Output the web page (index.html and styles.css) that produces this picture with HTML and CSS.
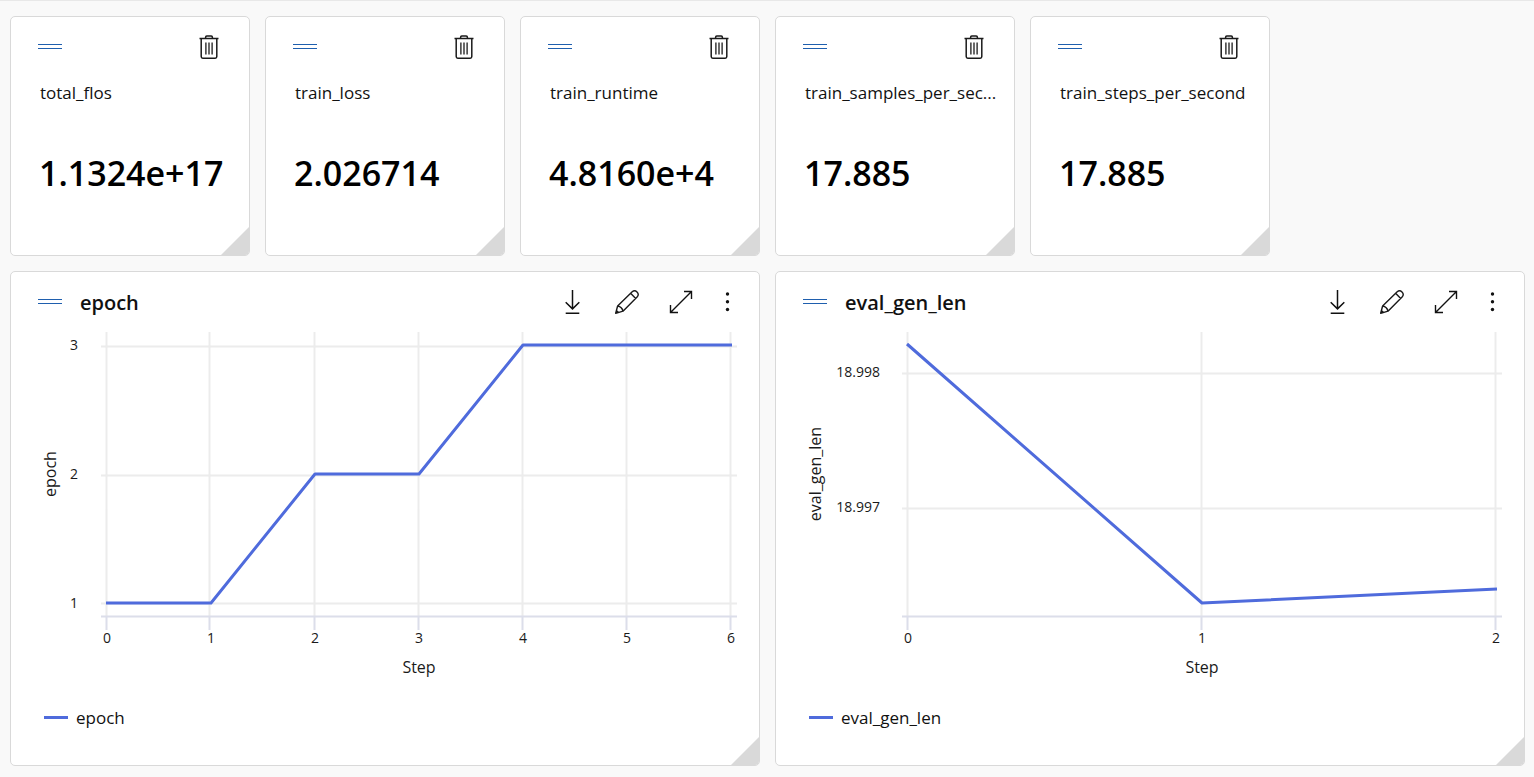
FILE: index.html
```html
<!DOCTYPE html>
<html lang="en">
<head>
<meta charset="utf-8">
<meta name="viewport" content="width=device-width, initial-scale=1">
<title>Metrics</title>
<link rel="stylesheet" href="styles.css">
</head>
<body>
<svg class="defs" aria-hidden="true">
  <symbol id="grip" viewBox="0 0 24 6"><path d="M0 .5h24M0 4.500h24" stroke="#1f5fae" stroke-width="1"/></symbol>
  <symbol id="trash" viewBox="0 0 20 24"><path d="M.5 3.600h19M6.600 3.400V2.200q0-1.200 1.200-1.200h4.400q1.200 0 1.200 1.200v1.200M2.200 4v17.600q0 1.600 1.600 1.600h12.400q1.600 0 1.600-1.600V4" fill="none" stroke="#1a1a1a" stroke-width="1.500"/><path d="M6.900 7.500v12M10 7.500v12M13.100 7.500v12" fill="none" stroke="#1a1a1a" stroke-width="1.300"/></symbol>
  <symbol id="download" viewBox="0 0 24 24"><path d="M11.500 0v18.500M4.700 12.200l6.800 6.700 6.800-6.700M4.700 23.300h13.600" fill="none" stroke="#111" stroke-width="1.500"/></symbol>
  <symbol id="pencil" viewBox="0 0 24 24"><path d="M.7 23.300 2.600 16 17.200 1.700C20.500-1 25 3.400 22.300 6.800L8 21.200ZM2.600 16q4.500.8 5.400 5.200M15.600 3.300l5.100 5.100M1.400 20.600l2 2" fill="none" stroke="#1a1a1a" stroke-width="1.400" stroke-linejoin="round"/></symbol>
  <symbol id="expand" viewBox="0 0 24 24"><path d="M1.500 22.500l21-21M15 1.500h7.500V9M1.500 15v7.500H9" fill="none" stroke="#111" stroke-width="1.400"/></symbol>
  <symbol id="more" viewBox="0 0 24 24"><g fill="#111"><circle cx="12.500" cy="4" r="1.700"/><circle cx="12.500" cy="11.700" r="1.700"/><circle cx="12.500" cy="19.500" r="1.700"/></g></symbol>
</svg>
<main class="board">
  <article class="card metric">
    <header class="metric-head"><svg class="grip"><use href="#grip"/></svg><button class="icon-btn" type="button" aria-label="Delete total_flos"><svg class="trash"><use href="#trash"/></svg></button></header>
    <h2 class="metric-name">total_flos</h2><p class="metric-value">1.1324e+17</p><span class="corner"></span>
  </article>
  <article class="card metric">
    <header class="metric-head"><svg class="grip"><use href="#grip"/></svg><button class="icon-btn" type="button" aria-label="Delete train_loss"><svg class="trash"><use href="#trash"/></svg></button></header>
    <h2 class="metric-name">train_loss</h2><p class="metric-value">2.026714</p><span class="corner"></span>
  </article>
  <article class="card metric">
    <header class="metric-head"><svg class="grip"><use href="#grip"/></svg><button class="icon-btn" type="button" aria-label="Delete train_runtime"><svg class="trash"><use href="#trash"/></svg></button></header>
    <h2 class="metric-name">train_runtime</h2><p class="metric-value">4.8160e+4</p><span class="corner"></span>
  </article>
  <article class="card metric">
    <header class="metric-head"><svg class="grip"><use href="#grip"/></svg><button class="icon-btn" type="button" aria-label="Delete train_samples_per_second"><svg class="trash"><use href="#trash"/></svg></button></header>
    <h2 class="metric-name">train_samples_per_sec...</h2><p class="metric-value">17.885</p><span class="corner"></span>
  </article>
  <article class="card metric">
    <header class="metric-head"><svg class="grip"><use href="#grip"/></svg><button class="icon-btn" type="button" aria-label="Delete train_steps_per_second"><svg class="trash"><use href="#trash"/></svg></button></header>
    <h2 class="metric-name">train_steps_per_second</h2><p class="metric-value">17.885</p><span class="corner"></span>
  </article>

  <article class="card chart">
    <header class="chart-head">
      <svg class="grip"><use href="#grip"/></svg>
      <h2 class="chart-title">epoch</h2>
      <div class="tools">
        <button class="icon-btn" type="button" aria-label="Download"><svg class="icon"><use href="#download"/></svg></button>
        <button class="icon-btn" type="button" aria-label="Edit"><svg class="icon"><use href="#pencil"/></svg></button>
        <button class="icon-btn" type="button" aria-label="Expand"><svg class="icon"><use href="#expand"/></svg></button>
        <button class="icon-btn more" type="button" aria-label="More"><svg class="icon"><use href="#more"/></svg></button>
      </div>
    </header>
    <svg class="plot" viewBox="0 0 748 360" role="img" aria-label="epoch by step">
      <path class="grid" d="M90 20.500H726M90 149.500H726M90 277.500H726M95.500 6V291M198.500 6V291M303.500 6V291M407.500 6V291M511.500 6V291M615.500 6V291M719.500 6V291"/>
      <path class="axis" d="M90 290.500H726M95.500 291V304M198.500 291V304M303.500 291V304M407.500 291V304M511.500 291V304M615.500 291V304M719.500 291V304"/>
      <path class="series" d="M95 277H200L304 148H408L512 19H721"/>
      <g class="tick mid"><text x="96" y="317">0</text><text x="200" y="317">1</text><text x="304" y="317">2</text><text x="408" y="317">3</text><text x="512" y="317">4</text><text x="616" y="317">5</text><text x="720" y="317">6</text></g>
      <g class="tick end"><text x="67" y="24">3</text><text x="67" y="153">2</text><text x="67" y="282">1</text></g>
      <text class="axis-name" x="408" y="347">Step</text>
      <text class="axis-name" transform="translate(45 148) rotate(-90)">epoch</text>
    </svg>
    <div class="legend"><span class="swatch"></span>epoch</div>
    <span class="corner"></span>
  </article>

  <article class="card chart">
    <header class="chart-head">
      <svg class="grip"><use href="#grip"/></svg>
      <h2 class="chart-title">eval_gen_len</h2>
      <div class="tools">
        <button class="icon-btn" type="button" aria-label="Download"><svg class="icon"><use href="#download"/></svg></button>
        <button class="icon-btn" type="button" aria-label="Edit"><svg class="icon"><use href="#pencil"/></svg></button>
        <button class="icon-btn" type="button" aria-label="Expand"><svg class="icon"><use href="#expand"/></svg></button>
        <button class="icon-btn more" type="button" aria-label="More"><svg class="icon"><use href="#more"/></svg></button>
      </div>
    </header>
    <svg class="plot" viewBox="0 0 748 360" role="img" aria-label="eval_gen_len by step">
      <path class="grid" d="M126 47.500H726M126 182.500H726M131.500 6V291M425.500 6V291M719.500 6V291"/>
      <path class="axis" d="M126 290.500H726M131.500 291V304M425.500 291V304M719.500 291V304"/>
      <path class="series" d="M131 18L426 277L721 263"/>
      <g class="tick mid"><text x="132" y="317">0</text><text x="426" y="317">1</text><text x="720" y="317">2</text></g>
      <g class="tick end"><text x="104" y="51">18.998</text><text x="104" y="186">18.997</text></g>
      <text class="axis-name" x="426" y="347">Step</text>
      <text class="axis-name" transform="translate(45 148) rotate(-90)">eval_gen_len</text>
    </svg>
    <div class="legend"><span class="swatch"></span>eval_gen_len</div>
    <span class="corner"></span>
  </article>
</main>
</body>
</html>
```
FILE: styles.css
```css
* { box-sizing: border-box; }
body {
  margin: 0;
  background: #f9f9f9;
  border-top: 1px solid #e8e8e8;
  color: #111;
  font-family: "Segoe UI", "Open Sans", "Noto Sans", sans-serif;
}
.defs { display: none; }
.board {
  display: grid;
  grid-template-columns: repeat(6, minmax(0, 1fr));
  gap: 15px;
  padding: 15px 9px 11px 10px;
}
.card {
  position: relative;
  background: #fff;
  border: 1px solid #d9d9d9;
  border-radius: 5px;
  overflow: hidden;
}
.corner {
  position: absolute;
  right: 0;
  bottom: 0;
  width: 28px;
  height: 28px;
  background: #d9d9d9;
  clip-path: polygon(100% 0, 100% 100%, 0 100%);
}
.grip { width: 24px; height: 6px; }
.icon-btn {
  display: flex;
  padding: 0;
  border: 0;
  background: none;
  cursor: pointer;
}
.metric { padding: 18px 30px 58px 27px; }
.metric-head { display: flex; align-items: center; justify-content: space-between; height: 24px; }
.trash { width: 20px; height: 24px; }
.metric-name {
  margin: 22px 0 0 2px;
  font-size: 17px;
  font-weight: 400;
  line-height: 24px;
  white-space: nowrap;
}
.metric-value {
  margin: 44px 0 0 1px;
  color: #000;
  font-size: 34px;
  font-weight: 600;
  line-height: 48px;
  white-space: nowrap;
}
.chart { grid-column: span 3; padding-bottom: 36px; }
.chart-head { display: flex; align-items: center; height: 54px; padding: 6px 20px 0 27px; }
.chart-title { margin: 0 0 0 18px; padding-top: 2px; font-size: 20px; font-weight: 600; line-height: 28px; }
.tools { display: flex; gap: 30px; margin-left: auto; }
.tools .more { margin-left: -8px; }
.icon { width: 24px; height: 24px; }
.plot { display: block; width: 100%; height: auto; }
.grid { fill: none; stroke: #ececec; stroke-width: 2; }
.axis { fill: none; stroke: #dcdeea; stroke-width: 2; }
.series { fill: none; stroke: #4f6bdc; stroke-width: 3; stroke-linejoin: round; }
.tick { font-size: 14px; fill: #1a1a1a; }
.mid, .axis-name { text-anchor: middle; }
.end { text-anchor: end; }
.axis-name { font-size: 16px; fill: #1a1a1a; }
.legend {
  display: flex;
  align-items: center;
  gap: 8px;
  height: 24px;
  margin: 19px 0 0 33px;
  font-size: 17px;
}
.swatch { width: 24px; height: 3px; background: #4f6bdc; }
```
